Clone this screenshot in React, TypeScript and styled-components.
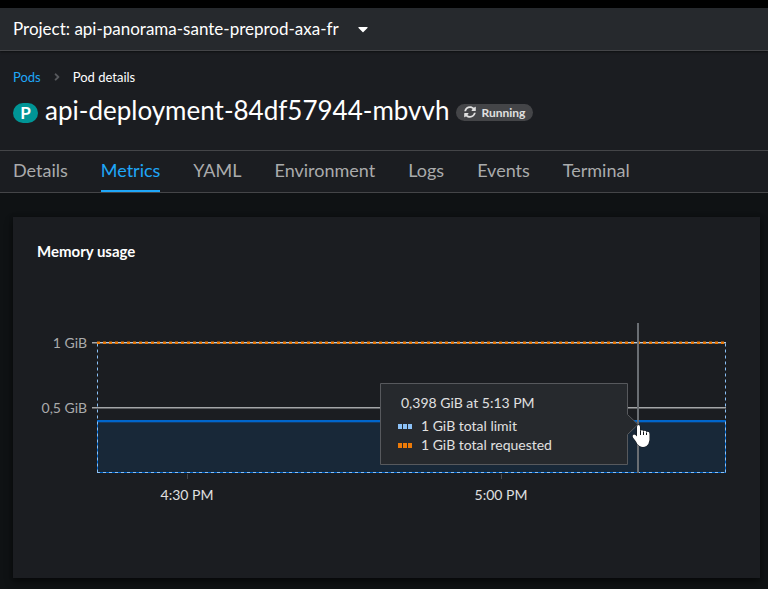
import React from 'react';
import styled, { createGlobalStyle } from 'styled-components';
import { FaAngleRight, FaCaretDown, FaSyncAlt } from 'react-icons/fa';

const GlobalStyle = createGlobalStyle`
  *, *::before, *::after { box-sizing: border-box; }
  body {
    margin: 0;
    background: #0f1214;
    color: #ffffff;
    font-family: Lato, "Open Sans", sans-serif;
    font-size: 14px;
  }
`;

const Page = styled.div`
  display: flex;
  flex-direction: column;
  min-height: 100vh;
  border-top: 8px solid #000000;
`;

const ProjectBar = styled.header`
  position: relative;
  display: flex;
  align-items: center;
  height: 43px;
  padding: 0 13px;
  background: #26292d;
  border-bottom: 1px solid #444548;
  box-shadow: 0 1px 2px rgba(0, 0, 0, 0.5);
`;

const ProjectButton = styled.button`
  display: flex;
  align-items: center;
  gap: 16px;
  padding: 0;
  border: 0;
  background: none;
  color: #ffffff;
  font-family: inherit;
  font-size: 17px;
  line-height: 24px;
  cursor: pointer;
`;

const Heading = styled.section`
  background: #1b1d21;
`;

const Breadcrumb = styled.nav`
  display: flex;
  align-items: center;
  gap: 10px;
  padding: 16px 13px 0;
  font-size: 13px;
  line-height: 20px;
`;

const Crumb = styled.a`
  color: #1fa7f8;
  text-decoration: none;
`;

const Separator = styled(FaAngleRight)`
  color: #57595d;
`;

const TitleRow = styled.div`
  display: flex;
  align-items: center;
  gap: 7px;
  padding: 6px 13px 23px;
`;

const Title = styled.h1`
  margin: 0;
  font-size: 26px;
  font-weight: 400;
  line-height: 34px;
`;

const KindBadge = styled.span`
  width: 25px;
  margin-top: 6px;
  border-radius: 10px;
  background: #009596;
  font-size: 17px;
  font-weight: 700;
  line-height: 20px;
  text-align: center;
`;

const Status = styled.span`
  display: flex;
  align-items: center;
  gap: 5px;
  height: 17px;
  margin-top: 4px;
  padding: 0 8px;
  border-radius: 9px;
  background: #444548;
  color: #e0e0e0;
  font-size: 12px;
  font-weight: 700;
`;

const Tabs = styled.nav`
  display: flex;
  gap: 33px;
  padding: 0 13px;
  border-top: 1px solid #444548;
  border-bottom: 1px solid #444548;
`;

const Tab = styled.a<{ $active?: boolean }>`
  border-bottom: 2px solid ${(p) => (p.$active ? '#1fa7f8' : 'transparent')};
  color: ${(p) => (p.$active ? '#1fa7f8' : '#aaabac')};
  font-size: 18px;
  line-height: 39px;
  text-decoration: none;
`;

const Main = styled.main`
  flex: 1;
  padding: 24px 8px 11px 13px;
`;

const Card = styled.section`
  padding-bottom: 56px;
  background: #1b1d21;
  box-shadow: 0 4px 8px rgba(3, 3, 3, 0.48), 0 0 4px rgba(3, 3, 3, 0.24);
`;

const CardTitle = styled.h2`
  margin: 0;
  padding: 24px 24px 0;
  font-size: 15px;
  font-weight: 700;
  line-height: 20px;
`;

const Chart = styled.svg`
  display: block;
  width: 100%;
  font-family: inherit;
`;

const AxisText = styled.text<{ $muted?: boolean }>`
  fill: ${(p) => (p.$muted ? '#aaabac' : '#e0e0e0')};
  font-size: 14px;
`;

const tabs = ['Details', 'Metrics', 'YAML', 'Environment', 'Logs', 'Events', 'Terminal'];

const grid = [
  { y: 82, label: '1 GiB' },
  { y: 147, label: '0,5 GiB' },
];

const ticks = [
  { x: 174, label: '4:30 PM' },
  { x: 488, label: '5:00 PM' },
];

const legend = [
  { y: 165, color: '#8bc1f7', label: '1 GiB total limit' },
  { y: 184, color: '#ec7a08', label: '1 GiB total requested' },
];

function MemoryChart() {
  return (
    <Chart viewBox="0 0 747 261" role="img" aria-label="Memory usage over time">
      {grid.map((g) => (
        <g key={g.label}>
          <rect x="79" y={g.y - 1} width="634" height="1" fill="#a4a6a8" />
          <rect x="79" y={g.y} width="634" height="1" fill="#5f6164" />
          <AxisText $muted x="74" y={g.y + 5} textAnchor="end">{g.label}</AxisText>
        </g>
      ))}
      {ticks.map((t) => (
        <g key={t.label}>
          <rect x={t.x} y="213" width="1" height="5" fill="#444548" />
          <AxisText x={t.x} y="239" textAnchor="middle">{t.label}</AxisText>
        </g>
      ))}

      <rect x="84" y="160" width="629" height="52" fill="#182838" />
      <path d="M84.5 160V211.5H712.5V160" fill="none" stroke="#0066cc" />
      <path d="M84 160H713" stroke="#0066cc" strokeWidth="2" />
      <path d="M84 161.5H713" stroke="#173b63" />
      <path d="M84.5 211.5V82M712.5 211.5V82M84 211.5H713" fill="none" stroke="#8bc1f7" strokeDasharray="3 3" />
      <path d="M84 81.5H713" stroke="#c0cedd" />
      <path d="M84 81.5H713" stroke="#ec7a08" strokeOpacity="0.5" strokeWidth="3" strokeDasharray="3 3" />
      <path d="M84 82H713" stroke="#ec7a08" strokeWidth="2" strokeDasharray="3 3" />

      <rect x="624" y="62" width="2" height="150" fill="#6a6e73" />

      <path
        d="M367.5 122.5H614.5V153.5L625 163.5L614.5 173.5V203.5H367.5Z"
        fill="#26292d"
        stroke="#57595d"
      />
      <AxisText x="388" y="147">0,398 GiB at 5:13 PM</AxisText>
      {legend.map((l) => (
        <g key={l.label}>
          {[385, 390, 395].map((x) => (
            <rect key={x} x={x} y={l.y - 2} width="4" height="5" fill={l.color} />
          ))}
          <AxisText x="408" y={l.y + 5}>{l.label}</AxisText>
        </g>
      ))}

      <path
        d="M624 166Q624 164 625.500 164T627 166V170Q629 168.500 630.500 170Q632.500 169 633.500 171Q636.500 170 636.500 173V179Q636 183 633.500 185Q630 187 626.500 185Q624 183.500 623 180.500L620 176.500Q619 174 621 173.500Q622.500 173.500 624 175.500Z"
        fill="#ffffff"
        stroke="#101216"
        strokeWidth="1"
        paintOrder="stroke"
      />
      <path d="M627.500 170V174M630.500 170.500V174M633.500 171.500V174" stroke="#101216" />
    </Chart>
  );
}

export default function App() {
  return (
    <>
      <GlobalStyle />
      <Page>
        <ProjectBar>
          <ProjectButton type="button" aria-haspopup="listbox">
            Project: api-panorama-sante-preprod-axa-fr
            <FaCaretDown size={16} aria-hidden />
          </ProjectButton>
        </ProjectBar>
        <Heading>
          <Breadcrumb aria-label="Breadcrumb">
            <Crumb href="#pods">Pods</Crumb>
            <Separator size={12} aria-hidden />
            <span>Pod details</span>
          </Breadcrumb>
          <TitleRow>
            <KindBadge title="Pod">P</KindBadge>
            <Title>api-deployment-84df57944-mbvvh</Title>
            <Status>
              <FaSyncAlt size={12} aria-hidden />
              Running
            </Status>
          </TitleRow>
          <Tabs aria-label="Pod views">
            {tabs.map((t) => (
              <Tab
                key={t}
                href={`#${t.toLowerCase()}`}
                $active={t === 'Metrics'}
                aria-current={t === 'Metrics' ? 'page' : undefined}
              >
                {t}
              </Tab>
            ))}
          </Tabs>
        </Heading>
        <Main>
          <Card>
            <CardTitle>Memory usage</CardTitle>
            <MemoryChart />
          </Card>
        </Main>
      </Page>
    </>
  );
}
